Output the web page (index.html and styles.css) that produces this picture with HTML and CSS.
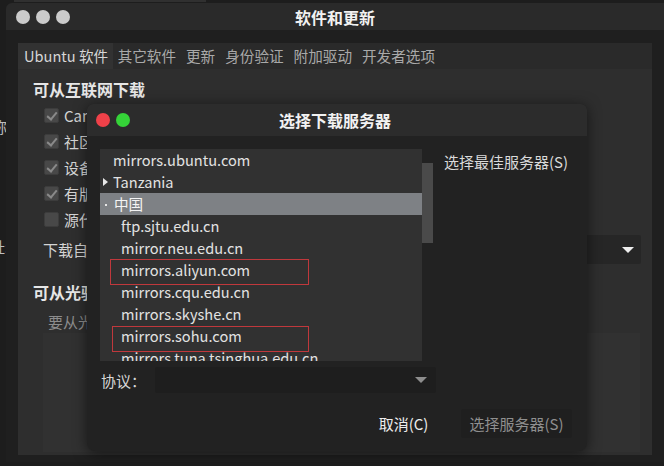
FILE: index.html
```html
<!DOCTYPE html>
<html lang="zh-CN">
<head>
<meta charset="utf-8">
<title>软件和更新</title>
<link rel="stylesheet" href="styles.css">
</head>
<body>
<div class="desk">
  <div class="behind-edge"></div>
  <span class="frag frag-1">）</span>
  <span class="frag frag-2">称</span>
  <span class="frag frag-3">址:</span>

  <div class="win main-win">
    <div class="titlebar">
      <div class="lights">
        <span class="light grey"></span>
        <span class="light grey"></span>
        <span class="light grey"></span>
      </div>
      <div class="title">软件和更新</div>
    </div>
    <div class="win-body">
      <div class="notebook">
        <div class="tabs">
          <span class="tab active">Ubuntu 软件</span>
          <span class="tab">其它软件</span>
          <span class="tab">更新</span>
          <span class="tab">身份验证</span>
          <span class="tab">附加驱动</span>
          <span class="tab">开发者选项</span>
        </div>
        <div class="page">
          <div class="heading">可从互联网下载</div>
          <div class="checks">
            <div class="check"><span class="box on"></span>Canonical 支持的免费和开源软件 (main)</div>
            <div class="check"><span class="box on"></span>社区维护的免费和开源软件 (universe)</div>
            <div class="check"><span class="box on"></span>设备的专有驱动 (restricted)</div>
            <div class="check"><span class="box on"></span>有版权和合法性问题的软件 (multiverse)</div>
            <div class="check"><span class="box"></span>源代码</div>
          </div>
          <div class="dl-row">
            <span class="dl-label">下载自：</span>
            <div class="combo main-combo"><span class="arrow"></span></div>
          </div>
          <div class="heading heading-2">可从光驱安装</div>
          <div class="hint">要从光驱安装，请插入安装光盘。</div>
          <div class="cd-box"></div>
        </div>
      </div>
    </div>
  </div>

  <div class="win dialog">
    <div class="titlebar dlg-titlebar">
      <div class="lights">
        <span class="light red"></span>
        <span class="light green"></span>
      </div>
      <div class="title">选择下载服务器</div>
    </div>
    <div class="dlg-body">
      <div class="top-area">
        <div class="tree">
          <div class="row">mirrors.ubuntu.com</div>
          <div class="row"><span class="expander"></span>Tanzania</div>
          <div class="row selected"><span class="expander-dot"></span>中国</div>
          <div class="row child">ftp.sjtu.edu.cn</div>
          <div class="row child">mirror.neu.edu.cn</div>
          <div class="row child">mirrors.aliyun.com</div>
          <div class="row child">mirrors.cqu.edu.cn</div>
          <div class="row child">mirrors.skyshe.cn</div>
          <div class="row child">mirrors.sohu.com</div>
          <div class="row child">mirrors.tuna.tsinghua.edu.cn</div>
          <div class="mark mark-aliyun"></div>
          <div class="mark mark-sohu"></div>
        </div>
        <div class="scrollbar"><div class="thumb"></div></div>
        <div class="side">选择最佳服务器(S)</div>
      </div>
      <div class="proto-row">
        <span class="proto-label">协议：</span>
        <div class="combo proto-combo"><span class="arrow dim"></span></div>
      </div>
      <div class="buttons">
        <span class="btn">取消(C)</span>
        <span class="btn disabled">选择服务器(S)</span>
      </div>
    </div>
  </div>
</div>
</body>
</html>
```

FILE: styles.css
```css
* { box-sizing: border-box; }

html, body {
  margin: 0;
  padding: 0;
  width: 664px;
  height: 466px;
  overflow: hidden;
  background: #1d1d1d;
}

body {
  font-family: "Noto Sans CJK SC", "Noto Sans", sans-serif;
  font-size: 15px;
  color: #dcdcdc;
}

.desk {
  position: relative;
  width: 664px;
  height: 466px;
  overflow: hidden;
  background: #1d1d1d;
}

.behind-edge {
  position: absolute;
  left: 14px;
  top: 0;
  width: 192px;
  height: 2px;
  background: #303030;
}

.frag {
  position: absolute;
  color: #bdbdbd;
  font-size: 15px;
  line-height: 20px;
}
.frag-1 { left: -9px; top: 6px; }
.frag-2 { left: -8px; top: 117px; }
.frag-3 { left: -10px; top: 237px; }

/* windows */
.win { position: absolute; }

.main-win {
  left: 6px;
  top: 3px;
  width: 664px;
  height: 459px;
  background: #1f1f1f;
  border-radius: 6px 0 0 0;
  display: flex;
  flex-direction: column;
}

.titlebar {
  position: relative;
  height: 27px;
  flex: none;
  background: #2a2a2a;
  border-radius: 6px 6px 0 0;
  display: flex;
  align-items: center;
  justify-content: center;
}

.lights {
  position: absolute;
  left: 10px;
  top: 0;
  bottom: 0;
  display: flex;
  align-items: center;
  gap: 6px;
}

.light {
  width: 14px;
  height: 14px;
  border-radius: 50%;
}
.light.grey { background: #cbcbcb; }
.light.red { background: #ef4149; }
.light.green { background: #35d338; }

.title {
  font-weight: bold;
  font-size: 16px;
  color: #f2f2f2;
  line-height: 20px;
  margin-left: -6px;
}

.win-body {
  flex: 1;
  padding: 13px 12px 7px 12px;
  display: flex;
}

.notebook {
  width: 634px;
  display: flex;
  flex-direction: column;
}

.tabs {
  height: 26px;
  flex: none;
  background: #2a2a2a;
  display: flex;
  align-items: stretch;
  font-size: 14.6px;
}

.tab {
  padding: 0 5px;
  line-height: 26px;
  color: #a9a9a9;
  white-space: nowrap;
}
.tab.active {
  background: #323232;
  color: #d6d6d6;
  padding-left: 6px;
  padding-right: 4.5px;
}

.page {
  flex: 1;
  background: #2e2e2e;
  padding: 10px 11px 3px 15px;
  display: flex;
  flex-direction: column;
}

.heading {
  font-weight: bold;
  font-size: 16px;
  color: #e6e6e6;
  line-height: 20px;
}
.heading-2 { margin-top: 18px; }

.checks {
  margin-top: 3px;
  margin-left: 11px;
  display: flex;
  flex-direction: column;
}

.check {
  height: 26px;
  display: flex;
  align-items: center;
  gap: 5px;
  white-space: nowrap;
  color: #d4d4d4;
}

.box {
  width: 15px;
  height: 15px;
  border-radius: 2px;
  background: #484848;
  border: 1px solid #3c3c3c;
  position: relative;
  flex: none;
}
.box.on::after {
  content: "";
  position: absolute;
  left: 4px;
  top: 1px;
  width: 4px;
  height: 8px;
  border: solid #8a8a8a;
  border-width: 0 2px 2px 0;
  transform: rotate(40deg);
}

.dl-row {
  margin-top: 3px;
  margin-left: 10px;
  height: 29px;
  display: flex;
  align-items: center;
}
.dl-label {
  color: #d4d4d4;
  white-space: nowrap;
}

.combo {
  position: relative;
  height: 100%;
}
.main-combo {
  flex: 1;
  margin-left: 40px;
  background: #262626;
  border-radius: 2px;
}

.arrow {
  position: absolute;
  right: 7px;
  top: 50%;
  margin-top: -3px;
  width: 0;
  height: 0;
  border-left: 6px solid transparent;
  border-right: 6px solid transparent;
  border-top: 6px solid #eeeeee;
}
.arrow.dim {
  border-top-color: #8e8e8e;
  right: 9px;
}

.hint {
  margin-top: 10px;
  margin-left: 15px;
  line-height: 20px;
  color: #8c8c8c;
}

.cd-box {
  flex: 1;
  margin: 1px 1px 0 10px;
  background: #313131;
}

/* dialog */
.dialog {
  left: 87px;
  top: 104px;
  width: 500px;
  height: 347px;
  background: #222222;
  border-radius: 6px 6px 8px 8px;
  box-shadow: 0 2px 14px rgba(0, 0, 0, 0.55);
  display: flex;
  flex-direction: column;
}

.dlg-titlebar {
  height: 32px;
  background: #2c2c2c;
}
.dlg-titlebar .lights { left: 9px; }
.dlg-titlebar .title { margin-left: -4px; }

.dlg-body {
  flex: 1;
  padding: 13px 15px 0 13px;
  display: flex;
  flex-direction: column;
}

.top-area {
  display: flex;
  height: 212px;
}

.tree {
  position: relative;
  width: 322px;
  height: 212px;
  background: #313131;
  overflow: hidden;
  font-size: 14.6px;
}

.row {
  position: relative;
  height: 22px;
  line-height: 22px;
  padding-left: 13px;
  color: #e2e2e2;
  white-space: nowrap;
}
.row.child { padding-left: 21px; }
.row.selected {
  background: #7e8185;
  color: #f4f4f4;
  padding-left: 14px;
}

.expander {
  position: absolute;
  left: 3px;
  top: 7px;
  width: 0;
  height: 0;
  border-top: 4px solid transparent;
  border-bottom: 4px solid transparent;
  border-left: 5px solid #e6e6e6;
}
.expander-dot {
  position: absolute;
  left: 5px;
  top: 11px;
  width: 2px;
  height: 2px;
  background: #e6e6e6;
}

.mark {
  position: absolute;
  border: 1px solid #c0383c;
  height: 26px;
}
.mark-aliyun { left: 10px; top: 110px; width: 199px; }
.mark-sohu { left: 12px; top: 177px; width: 197px; }

.scrollbar {
  width: 12px;
  position: relative;
}
.thumb {
  position: absolute;
  left: 0;
  right: 1px;
  top: 14px;
  height: 80px;
  background: #4a4a4a;
}

.side {
  margin-left: 10px;
  margin-top: 3px;
  line-height: 20px;
  color: #dadada;
  white-space: nowrap;
}

.proto-row {
  margin-top: 6px;
  height: 26px;
  display: flex;
  align-items: center;
  padding-left: 1px;
}
.proto-label {
  color: #d6d6d6;
  white-space: nowrap;
  width: 54px;
}
.proto-combo {
  width: 281px;
  background: #1e1e1e;
  border-radius: 2px;
}

.buttons {
  margin-top: 16px;
  display: flex;
  justify-content: flex-end;
  gap: 24px;
}

.btn {
  height: 29px;
  line-height: 29px;
  padding: 0 8.5px;
  color: #ededed;
  border-radius: 3px;
  white-space: nowrap;
}
.btn.disabled {
  color: #8f8f8f;
  background: #1f1f1f;
}
```
